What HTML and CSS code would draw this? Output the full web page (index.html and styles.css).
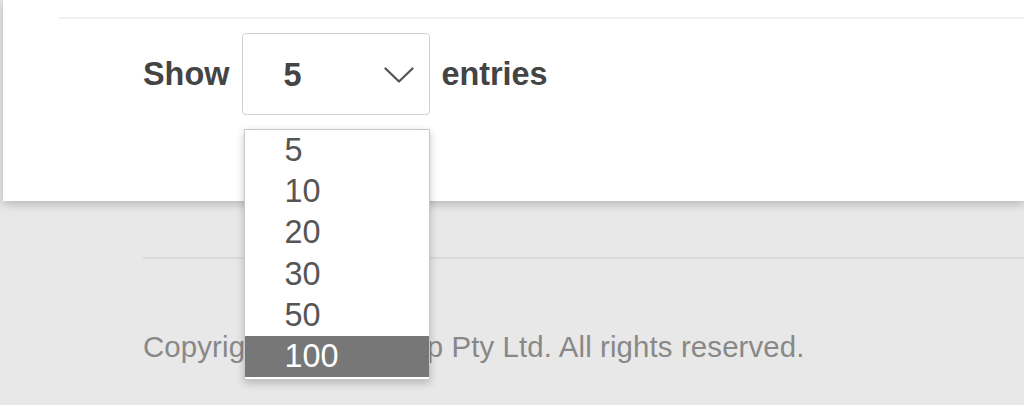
FILE: index.html
```html
<!DOCTYPE html>
<html lang="en">
<head>
<meta charset="utf-8">
<title>Entries</title>
<link rel="stylesheet" href="styles.css">
</head>
<body>
<div class="card">
  <div class="rule"></div>
  <div class="length">
    <span class="label">Show</span>
    <div class="select">
      <span class="value">5</span>
      <svg class="chev" width="30" height="16" viewBox="0 0 30 16"><polyline points="1.5,1.5 15,14.5 28.5,1.5" fill="none" stroke="#555" stroke-width="2.3" stroke-linecap="round" stroke-linejoin="round"/></svg>
      <ul class="menu">
        <li>5</li>
        <li>10</li>
        <li>20</li>
        <li>30</li>
        <li>50</li>
        <li class="active">100</li>
      </ul>
    </div>
    <span class="label">entries</span>
  </div>
</div>
<footer class="footer">
  <p class="copy">Copyright ©2019 Shop Pty Ltd. All rights reserved.</p>
</footer>
</body>
</html>
```

FILE: styles.css
```css
html, body {
  margin: 0;
  padding: 0;
}
body {
  background: #e8e8e8;
  font-family: "Liberation Sans", Arial, sans-serif;
  height: 405px;
  overflow: hidden;
}
.card {
  margin-left: 3px;
  height: 201px;
  background: #fff;
  box-shadow: 0 3px 9px rgba(0, 0, 0, 0.22);
  position: relative;
  z-index: 1;
}
.rule {
  margin-left: 56px;
  height: 17px;
  border-bottom: 2px solid #efefef;
}
.length {
  display: flex;
  align-items: center;
  padding-left: 140px;
  margin-top: 14px;
}
.label {
  font-weight: bold;
  font-size: 32.4px;
  color: #444;
}
.select {
  position: relative;
  box-sizing: border-box;
  width: 188px;
  height: 82px;
  margin: 0 11px 0 13px;
  border: 1px solid #cfcfcf;
  border-radius: 4px;
  display: flex;
  align-items: center;
  padding-left: 40px;
}
.value {
  font-weight: bold;
  font-size: 32.4px;
  color: #444;
  margin-top: 2px;
}
.chev {
  position: absolute;
  right: 15px;
  top: 33px;
}
.menu {
  position: absolute;
  left: 1px;
  top: 95px;
  width: 186px;
  box-sizing: border-box;
  margin: 0;
  padding: 0 0 2px 0;
  list-style: none;
  background: #fff;
  border: 1px solid #c9c9c9;
  box-shadow: 0 3px 8px rgba(0, 0, 0, 0.22);
  z-index: 5;
}
.menu li {
  height: 41.2px;
  line-height: 41.2px;
  padding-left: 39px;
  font-size: 32.4px;
  color: #555;
}
.menu li.active {
  background: #777;
  color: #fff;
}
.footer {
  margin: 56px 0 0 143px;
  border-top: 2px solid #dadada;
}
.copy {
  margin: 0;
  padding-top: 71px;
  font-size: 29.4px;
  letter-spacing: 0.12px;
  color: #888;
}
```
